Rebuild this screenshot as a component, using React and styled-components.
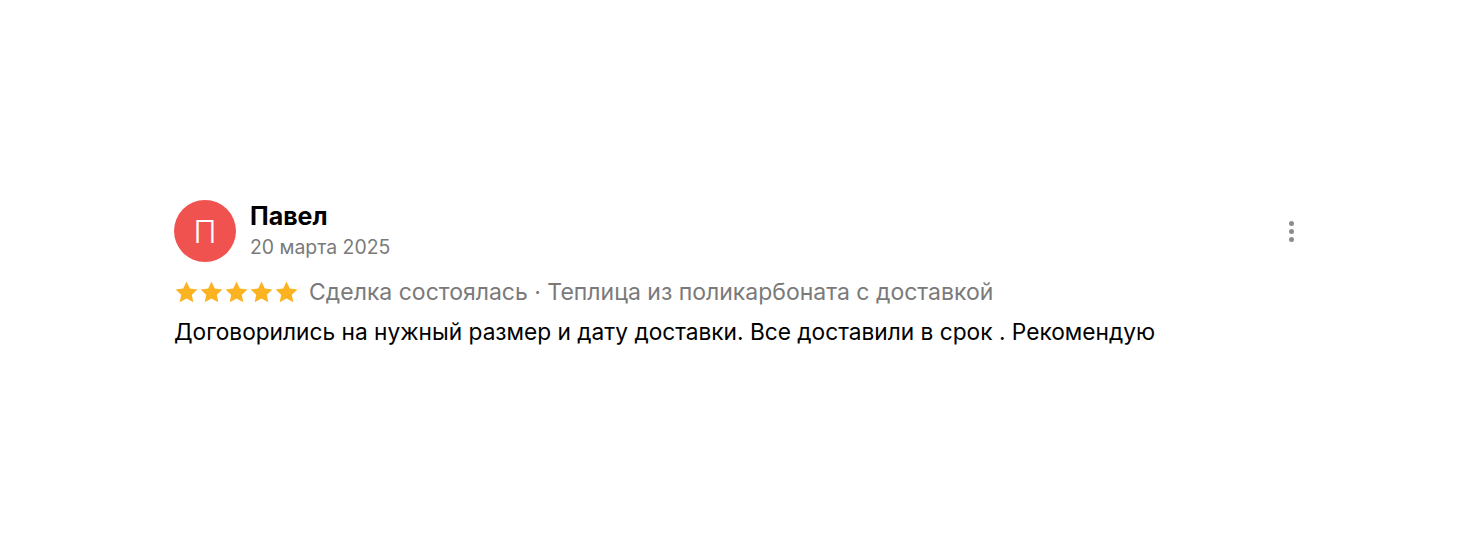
import React from 'react';
import styled, { createGlobalStyle } from 'styled-components';

const GlobalStyle = createGlobalStyle`
    html, body {
        margin: 0;
        padding: 0;
        background: #ffffff;
    }
    body {
        font-family: Inter, "Noto Sans", sans-serif;
    }
`;

const Page = styled.div`
    width: 1460px;
    height: 540px;
    box-sizing: border-box;
    padding: 200px 0 0 174px;
`;

const Review = styled.div`
    width: 1130px;
    display: flex;
    flex-direction: column;
`;

const Header = styled.div`
    display: flex;
    align-items: center;
    gap: 14px;
`;

const Avatar = styled.div`
    width: 62px;
    height: 62px;
    border-radius: 50%;
    background: ${props => props.color};
    color: #fff;
    display: flex;
    align-items: center;
    justify-content: center;
    font-size: 31px;
    font-weight: 300;
`;

const Author = styled.div`
    flex: 1;
    display: flex;
    flex-direction: column;
    gap: 5px;
    padding-bottom: 2px;
`;

const Name = styled.div`
    font-size: 25px;
    font-weight: 700;
    color: #000;
    line-height: 28px;
`;

const DateText = styled.div`
    font-size: 19.4px;
    color: #7a7a7a;
    line-height: 24px;
`;

const MoreButton = styled.div`
    width: 24px;
    display: flex;
    flex-direction: column;
    align-items: center;
    gap: 3px;
    margin-bottom: -1px;
    margin-right: 1px;
    span {
        width: 5px;
        height: 5px;
        border-radius: 50%;
        background: #8c8c8c;
    }
`;

const Meta = styled.div`
    display: flex;
    align-items: center;
    margin-top: 16px;
    gap: 10px;
`;

const Stars = styled.div`
    display: flex;
`;

const MetaText = styled.div`
    font-size: 23px;
    color: #7a7a7a;
    line-height: 28px;
`;

const Body = styled.div`
    margin-top: 12px;
    font-size: 22.7px;
    color: #000;
    line-height: 28px;
`;

const Star = () => (
    <svg width="25" height="25" viewBox="0 0 24 24">
        <path d="M12 1.4l3.15 6.7 7.35.9-5.4 5.05 1.45 7.25L12 17.8l-6.55 3.5 1.45-7.25-5.4-5.05 7.35-.9z" fill="#fbb321" />
    </svg>
);

const App = () => {
    return (
        <Page>
            <GlobalStyle />
            <Review>
                <Header>
                    <Avatar color="#f0524f">П</Avatar>
                    <Author>
                        <Name>Павел</Name>
                        <DateText>20 марта 2025</DateText>
                    </Author>
                    <MoreButton><span /><span /><span /></MoreButton>
                </Header>
                <Meta>
                    <Stars>
                        {[0, 1, 2, 3, 4].map(i => <Star key={i} />)}
                    </Stars>
                    <MetaText>Сделка состоялась · Теплица из поликарбоната с доставкой</MetaText>
                </Meta>
                <Body>Договорились на нужный размер и дату доставки. Все доставили в срок . Рекомендую</Body>
            </Review>
        </Page>
    );
};

export default App;
